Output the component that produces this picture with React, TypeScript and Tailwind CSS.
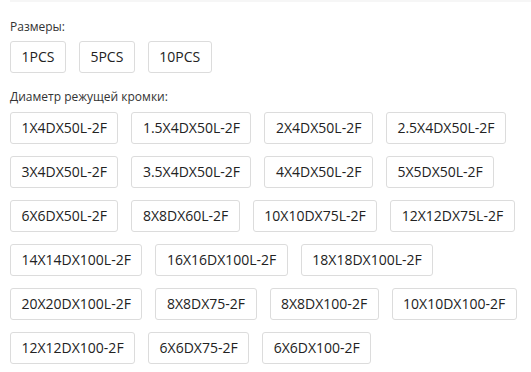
import React from "react";

const sizes = ["1PCS", "5PCS", "10PCS"];

const diameters = [
  "1X4DX50L-2F",
  "1.5X4DX50L-2F",
  "2X4DX50L-2F",
  "2.5X4DX50L-2F",
  "3X4DX50L-2F",
  "3.5X4DX50L-2F",
  "4X4DX50L-2F",
  "5X5DX50L-2F",
  "6X6DX50L-2F",
  "8X8DX60L-2F",
  "10X10DX75L-2F",
  "12X12DX75L-2F",
  "14X14DX100L-2F",
  "16X16DX100L-2F",
  "18X18DX100L-2F",
  "20X20DX100L-2F",
  "8X8DX75-2F",
  "8X8DX100-2F",
  "10X10DX100-2F",
  "12X12DX100-2F",
  "6X6DX75-2F",
  "6X6DX100-2F",
];

function Option({ label }: { label: string }) {
  return (
    <button className="h-[32px] px-[10.5px] border border-[#dcdcdc] rounded-[3px] bg-white text-[14px] text-[#222] leading-[30px]">
      {label}
    </button>
  );
}

export default function App() {
  return (
    <div className="w-[531px] h-[372px] bg-white font-['Open_Sans',sans-serif] overflow-hidden">
      <div className="h-[2px] ml-[10px] bg-[#f6f6f6]" />
      <div className="px-[10px] pt-[17px]">
        <div className="text-[12px] text-[#333] leading-[16px]">Размеры:</div>
        <div className="flex flex-wrap gap-[13px] mt-[6px]">
          {sizes.map((s) => (
            <Option key={s} label={s} />
          ))}
        </div>
        <div className="text-[12px] text-[#333] leading-[16px] mt-[16px]">Диаметр режущей кромки:</div>
        <div className="flex flex-wrap gap-x-[13px] gap-y-[12px] mt-[7px]">
          {diameters.map((d) => (
            <Option key={d} label={d} />
          ))}
        </div>
      </div>
    </div>
  );
}
